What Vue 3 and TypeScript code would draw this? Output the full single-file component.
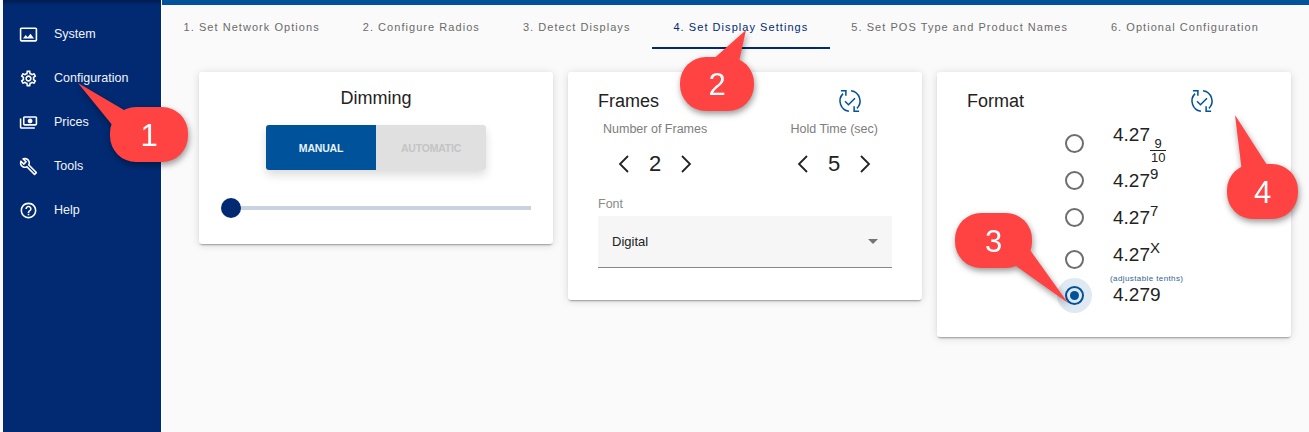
<template>
  <div class="page">
    <aside class="sidebar">
      <nav class="menu">
        <a v-for="item in menu" :key="item.label" class="menu-item">
          <svg class="menu-icon" viewBox="0 0 24 24" fill="#fff"><path :d="item.icon" :transform="item.flip ? 'translate(24 0) scale(-1 1)' : undefined" /></svg>
          <span>{{ item.label }}</span>
        </a>
      </nav>
    </aside>

    <main class="main">
      <div class="tabs">
        <div v-for="(t, i) in tabs" :key="t" class="tab" :class="{ active: i === 3 }">{{ t }}</div>
      </div>

      <div class="cards">
        <section class="card dimming">
          <h3>Dimming</h3>
          <div class="toggle">
            <button class="on">MANUAL</button>
            <button class="off">AUTOMATIC</button>
          </div>
          <div class="slider">
            <span class="thumb"></span>
          </div>
        </section>

        <section class="card frames">
          <header class="card-head">
            <h3>Frames</h3>
            <svg class="sync" viewBox="0 0 24 24"><g v-html="syncIcon"></g></svg>
          </header>
          <div class="steppers">
            <div v-for="s in steppers" :key="s.label" class="stepper">
              <div class="step-label">{{ s.label }}</div>
              <div class="step-row">
                <svg viewBox="0 0 14 20" class="chev"><path d="M11 2 3 10l8 8" /></svg>
                <span class="step-val">{{ s.value }}</span>
                <svg viewBox="0 0 14 20" class="chev"><path d="M3 2l8 8-8 8" /></svg>
              </div>
            </div>
          </div>
          <div class="font-label">Font</div>
          <div class="select">
            <span>Digital</span>
            <i class="caret"></i>
          </div>
        </section>

        <section class="card format">
          <header class="card-head">
            <h3>Format</h3>
            <svg class="sync" viewBox="0 0 24 24"><g v-html="syncIcon"></g></svg>
          </header>
          <div class="radios">
            <div class="radio-row r1">
              <span class="radio"></span>
              <span class="num">4.27<span class="frac"><span class="top">9</span><span class="bot">10</span></span></span>
            </div>
            <div class="radio-row r2">
              <span class="radio"></span>
              <span class="num">4.27<sup>9</sup></span>
            </div>
            <div class="radio-row r3">
              <span class="radio"></span>
              <span class="num">4.27<sup>7</sup></span>
            </div>
            <div class="radio-row r4">
              <span class="radio"></span>
              <span class="num">4.27<sup>X</sup><small>(adjustable tenths)</small></span>
            </div>
            <div class="radio-row r5">
              <span class="radio checked"></span>
              <span class="num">4.279</span>
            </div>
          </div>
        </section>
      </div>
    </main>

    <svg class="callouts" width="1309" height="432" viewBox="0 0 1309 432">
      <g v-for="c in callouts" :key="c.n" class="callout">
        <polygon :points="c.tail" />
        <rect :x="c.x" :y="c.y" :width="c.w" :height="c.h" :rx="c.r" :ry="c.r" />
        <text :x="c.x + c.w / 2" :y="c.y + c.h / 2 + 11">{{ c.n }}</text>
      </g>
    </svg>
  </div>
</template>

<script setup lang="ts">
const menu = [
  { label: 'System', icon: 'M21 3H3C2 3 1 4 1 5v14c0 1.1.9 2 2 2h18c1 0 2-1 2-2V5c0-1-1-2-2-2zm0 15.92c-.02.03-.06.06-.08.08H3V5.08L3.08 5h17.83c.03.02.06.06.08.08v13.84zm-10-3.41L8.5 12.5 5 17h14l-4.5-6-3.5 4.51z' },
  { label: 'Configuration', icon: 'M19.43 12.98c.04-.32.07-.64.07-.98 0-.34-.03-.66-.07-.98l2.11-1.65c.19-.15.24-.42.12-.64l-2-3.46c-.09-.16-.26-.25-.44-.25-.06 0-.12.01-.17.03l-2.49 1c-.52-.4-1.08-.73-1.69-.98l-.38-2.65C14.46 2.18 14.25 2 14 2h-4c-.25 0-.46.18-.49.42l-.38 2.65c-.61.25-1.17.59-1.69.98l-2.49-1c-.06-.02-.12-.03-.18-.03-.17 0-.34.09-.43.25l-2 3.46c-.13.22-.07.49.12.64l2.11 1.65c-.04.32-.07.65-.07.98 0 .33.03.66.07.98l-2.11 1.65c-.19.15-.24.42-.12.64l2 3.46c.09.16.26.25.44.25.06 0 .12-.01.17-.03l2.49-1c.52.4 1.08.73 1.69.98l.38 2.65c.03.24.24.42.49.42h4c.25 0 .46-.18.49-.42l.38-2.65c.61-.25 1.17-.59 1.69-.98l2.49 1c.06.02.12.03.18.03.17 0 .34-.09.43-.25l2-3.46c.12-.22.07-.49-.12-.64l-2.11-1.65zm-1.98-1.71c.04.31.05.52.05.73 0 .21-.02.43-.05.73l-.14 1.13.89.7 1.08.84-.7 1.21-1.27-.51-1.04-.42-.9.68c-.43.32-.84.56-1.25.73l-1.06.43-.16 1.13-.2 1.35h-1.4l-.19-1.35-.16-1.13-1.06-.43c-.43-.18-.83-.41-1.23-.71l-.91-.7-1.06.43-1.27.51-.7-1.21 1.08-.84.89-.7-.14-1.13c-.03-.31-.05-.54-.05-.74s.02-.43.05-.73l.14-1.13-.89-.7-1.08-.84.7-1.21 1.27.51 1.04.42.9-.68c.43-.32.84-.56 1.25-.73l1.06-.43.16-1.13.2-1.35h1.39l.19 1.35.16 1.13 1.06.43c.43.18.83.41 1.23.71l.91.7 1.06-.43 1.27-.51.7 1.21-1.07.85-.89.7.14 1.13zM12 8c-2.21 0-4 1.79-4 4s1.79 4 4 4 4-1.79 4-4-1.79-4-4-4zm0 6c-1.1 0-2-.9-2-2s.9-2 2-2 2 .9 2 2-.9 2-2 2z' },
  { label: 'Prices', flip: true, icon: 'M19 14V6c0-1.1-.9-2-2-2H3c-1.1 0-2 .9-2 2v8c0 1.1.9 2 2 2h14c1.1 0 2-.9 2-2zm-2 0H3V6h14v8zm-7-7c-1.66 0-3 1.34-3 3s1.34 3 3 3 3-1.34 3-3-1.34-3-3-3zm13 0v11c0 1.1-.9 2-2 2H4v-2h17V7h2z' },
  { label: 'Tools', icon: 'M22.61 18.99l-9.08-9.08c.93-2.34.45-5.1-1.44-7C9.79.61 6.21.4 3.66 2.25L7.5 6.1 6.08 7.51 2.25 3.69C.4 6.23.61 9.82 2.91 12.11c1.86 1.86 4.57 2.35 6.89 1.48l9.11 9.11c.39.39 1.02.39 1.41 0l2.3-2.3c.4-.38.4-1.01-.01-1.41zm-3 1.6l-9.46-9.46c-.61.45-1.29.72-2 .82-1.36.2-2.79-.21-3.83-1.25C3.37 9.76 2.93 8.5 3 7.26l3.09 3.09 4.24-4.24-3.09-3.09c1.24-.07 2.49.37 3.44 1.31 1.08 1.08 1.49 2.57 1.24 3.96-.12.71-.42 1.37-.88 1.96l9.45 9.45-.88.88z' },
  { label: 'Help', icon: 'M11 18h2v-2h-2v2zm1-16C6.48 2 2 6.48 2 12s4.48 10 10 10 10-4.48 10-10S17.52 2 12 2zm0 18c-4.41 0-8-3.59-8-8s3.59-8 8-8 8 3.59 8 8-3.59 8-8 8zm0-14c-2.21 0-4 1.79-4 4h2c0-1.1.9-2 2-2s2 .9 2 2c0 2-3 1.75-3 5h2c0-2.25 3-2.5 3-5 0-2.21-1.79-4-4-4z' }
]

const tabs = [
  '1. Set Network Options',
  '2. Configure Radios',
  '3. Detect Displays',
  '4. Set Display Settings',
  '5. Set POS Type and Product Names',
  '6. Optional Configuration'
]

const steppers = [
  { label: 'Number of Frames', value: 2 },
  { label: 'Hold Time (sec)', value: 5 }
]

const syncIcon = '<path d="M11 21.5A9.6 9.6 0 0 1 5.6 5.2M13 2.5a9.6 9.6 0 0 1 5.4 16.3" fill="none" stroke="#00529b" stroke-width="1.4"/><path d="M3.6 2.6h4.6v4.6M20.4 21.4h-4.6v-4.6" fill="none" stroke="#00529b" stroke-width="1.4"/><path d="M7.4 12.2l3.2 3.2 6-6" fill="none" stroke="#00529b" stroke-width="1.4"/>'

const callouts = [
  { n: 1, x: 110, y: 107, w: 78, h: 55, r: 26, tail: '78,83 124,110 113,126' },
  { n: 2, x: 680, y: 57, w: 74, h: 54, r: 26, tail: '746,30 710,62 738,66' },
  { n: 3, x: 955, y: 213, w: 77, h: 55, r: 26, tail: '1068,303 1030,250 1016,266' },
  { n: 4, x: 1227, y: 164, w: 71, h: 55, r: 26, tail: '1235,115 1267,165 1242,172' }
]
</script>

<style>
html, body { margin: 0; background: #fafafa; overflow: hidden; }
</style>

<style scoped>
.page { position: relative; width: 1309px; height: 432px; display: flex; font-family: "Liberation Sans", Arial, sans-serif; background: #fafafa; overflow: hidden; }
.sidebar { width: 158px; margin-left: 3px; background: #012a72; border-right: 1px solid #fff; padding-top: 12px; box-sizing: content-box; box-shadow: inset 0 5px 3px -2px #011f56; }
.menu { display: flex; flex-direction: column; }
.menu-item { height: 44px; display: flex; align-items: center; color: #f2f5fa; font-size: 12.5px; padding-left: 16px; gap: 16px; }
.menu-icon { width: 19px; height: 19px; flex: none; }
.main { flex: 1; min-width: 0; border-top: 5px solid #00529b; }
.tabs { display: flex; height: 44px; border-top: 0; }
.tab { padding: 0 21.5px; line-height: 44px; height: 44px; font-size: 11px; letter-spacing: 1.05px; color: #6a6a6a; white-space: nowrap; box-sizing: border-box; }
.tab.active { color: #012a72; border-bottom: 2px solid #012a72; }
.cards { display: flex; align-items: flex-start; gap: 15px; padding: 23px 0 0 37px; }
.card { width: 354px; background: #fff; border-radius: 3px; box-shadow: 0 2px 2px -1px rgba(0,0,0,.35), 0 1px 8px rgba(0,0,0,.14); box-sizing: border-box; }
h3 { margin: 0; font-weight: 400; font-size: 18px; color: #222; }
.dimming { height: 172px; padding-top: 16px; }
.dimming h3 { text-align: center; line-height: 21px; }
.toggle { display: flex; width: 220px; height: 45px; margin: 16px 0 0 67px; border-radius: 3px; box-shadow: 0 5px 10px rgba(0,0,0,.14); }
.toggle button { flex: 1; border: 0; padding: 0; font: 700 10.5px "Liberation Sans", Arial, sans-serif; letter-spacing: -.2px; }
.toggle .on { background: #00529b; color: #e8f2fb; border-radius: 3px 0 0 3px; }
.toggle .off { background: #e0e0e0; color: #c4c4c4; border-radius: 0 3px 3px 0; }
.slider { position: relative; height: 4px; margin: 36px 22px 0 26px; background: #c8d2e0; }
.thumb { position: absolute; left: -4px; top: -8px; width: 20px; height: 20px; border-radius: 50%; background: #012a72; }
.frames { height: 228px; padding: 16px 30px 0 30px; }
.card-head { display: flex; justify-content: space-between; align-items: center; height: 26px; }
.frames .card-head { padding-right: 29px; }
.format .card-head { padding-right: 46px; }
.sync { width: 26px; height: 26px; }
.steppers { display: flex; justify-content: space-between; margin-top: 7px; padding: 0 14px 0 5px; }
.stepper { display: flex; flex-direction: column; align-items: center; }
.step-label { font-size: 12.5px; color: #7d7d7d; line-height: 16px; }
.step-row { display: flex; align-items: center; gap: 18px; margin-top: 15px; height: 24px; }
.chev { width: 14px; height: 20px; fill: none; stroke: #222; stroke-width: 1.8; }
.step-val { font-size: 22px; color: #222; }
.font-label { font-size: 12.5px; color: #8a8a8a; margin-top: 20px; line-height: 16px; }
.select { display: flex; justify-content: space-between; align-items: center; height: 51px; margin-top: 4px; padding: 0 14px; background: #f6f6f6; border-bottom: 1px solid #888; font-size: 13px; color: #222; margin-right: 0; }
.caret { width: 0; height: 0; border-left: 5px solid transparent; border-right: 5px solid transparent; border-top: 5px solid #757575; }
.format { height: 265px; padding: 16px 30px 0 30px; }
.radios { display: flex; flex-direction: column; padding-left: 98px; margin-top: 11px; }
.radio-row { display: flex; align-items: center; gap: 29px; height: 37px; }
.radio { position: relative; width: 15px; height: 15px; flex: none; border: 2px solid #6e6e6e; border-radius: 50%; }
.radio.checked { border-color: #00529b; }
.radio.checked::before { content: ""; position: absolute; left: -10px; top: -10px; width: 35px; height: 35px; border-radius: 50%; background: rgba(0,82,155,.13); }
.radio.checked::after { content: ""; position: absolute; left: 3px; top: 3px; width: 9px; height: 9px; border-radius: 50%; background: #00529b; }
.num { position: relative; font-size: 19px; color: #222; line-height: 22px; }
sup { font-size: 15px; line-height: 0; vertical-align: 8px; }
small { position: absolute; left: -3px; top: 24px; font-size: 8px; letter-spacing: .4px; color: #2d6597; white-space: nowrap; }
.frac { display: inline-flex; flex-direction: column; align-items: center; vertical-align: -7px; margin-left: 1px; font-size: 13px; line-height: 13px; }
.frac .top { border-bottom: 1px solid #222; padding: 0 1px; width: 100%; text-align: center; }
.r4 { height: 45px; }
.r4 .radio { margin-top: 2px; }
.r4 .num { margin-top: -8px; }
.r5 { height: 36px; margin-top: -4px; }
.callouts { position: absolute; left: 0; top: 0; pointer-events: none; }
.callout { filter: drop-shadow(1px 3px 3px rgba(0,0,0,.4)); fill: #ff4343; }
.callout text { fill: #fff; font-size: 31px; text-anchor: middle; font-family: "Liberation Sans", Arial, sans-serif; }
</style>
